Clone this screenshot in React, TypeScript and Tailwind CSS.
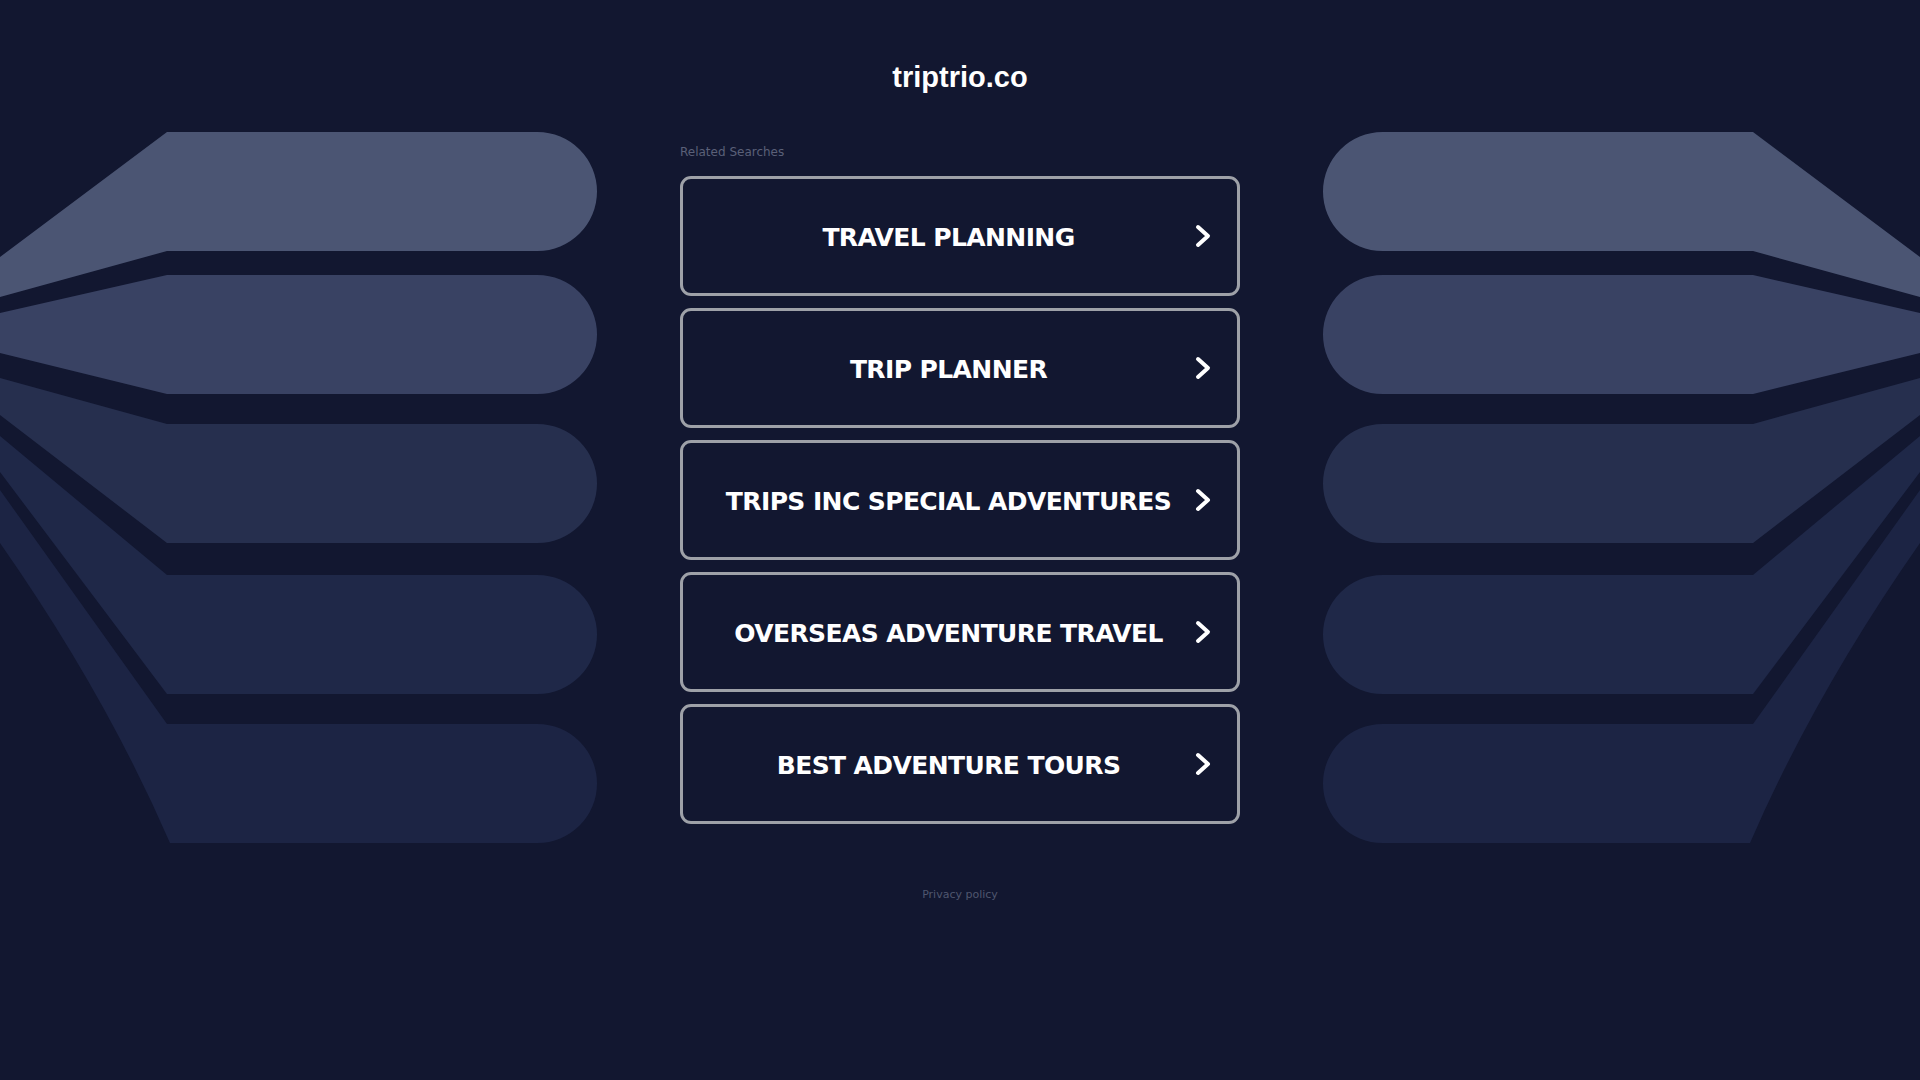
const searches = [
  "TRAVEL PLANNING",
  "TRIP PLANNER",
  "TRIPS INC SPECIAL ADVENTURES",
  "OVERSEAS ADVENTURE TRAVEL",
  "BEST ADVENTURE TOURS",
];

// pill bands fanning out from the page edge, top to bottom
const bands = [
  { d: "M0,257 L167,132 L537.5,132 A59.5,59.5 0 0 1 537.5,251 L167,251 L0,297 Z", fill: "#4b5573" },
  { d: "M0,313 L167,275 L537.5,275 A59.5,59.5 0 0 1 537.5,394 L167,394 L0,353 Z", fill: "#394263" },
  { d: "M0,378 L167,424 L537.5,424 A59.5,59.5 0 0 1 537.5,543 L167,543 L0,415 Z", fill: "#262f4e" },
  { d: "M0,436 L167,575 L537.5,575 A59.5,59.5 0 0 1 537.5,694 L167,694 L0,472 Z", fill: "#1f2848" },
  { d: "M0,490 L167,724 L537.5,724 A59.5,59.5 0 0 1 537.5,843 L170,843 Q105,693 0,543 Z", fill: "#1c2444" },
];

function Wing({ flip = false }: { flip?: boolean }) {
  return (
    <svg width="600" height="860" viewBox="0 0 600 860" className="block shrink-0">
      <g transform={flip ? "translate(600,0) scale(-1,1)" : undefined}>
        {bands.map((b, i) => (
          <path key={i} d={b.d} fill={b.fill} />
        ))}
      </g>
    </svg>
  );
}

function Chevron() {
  return (
    <svg width="18" height="28" viewBox="0 0 18 28" className="shrink-0">
      <polyline
        points="4,5 14,14 4,23"
        fill="none"
        stroke="#ffffff"
        strokeWidth="4"
        strokeLinecap="round"
        strokeLinejoin="round"
      />
    </svg>
  );
}

export default function App() {
  return (
    <div className="flex min-h-screen bg-[#121730]">
      <Wing />

      <div className="flex flex-1 flex-col items-center pt-[58px]">
        <h1 className="text-[29px] font-bold leading-[38px] text-white [font-family:'Liberation_Sans',Arial,sans-serif]">
          triptrio.co
        </h1>

        <div className="mt-[47px] w-[560px]">
          <p className="text-[12px] leading-[18px] text-[#5a6078] [font-family:'DejaVu_Sans',sans-serif]">
            Related Searches
          </p>

          <div className="mt-[15px] flex flex-col gap-[12px]">
            {searches.map((label) => (
              <a
                key={label}
                href="#"
                className="flex h-[120px] items-center gap-[5px] rounded-[11px] border-[3px] border-[#9ea1a8] bg-[#121730] pl-[25px] pr-[25px]"
              >
                <span className="flex-1 pt-[4px] text-center text-[25px] font-bold leading-[30px] tracking-[-0.6px] text-white [font-family:'DejaVu_Sans',sans-serif]">
                  {label}
                </span>
                <Chevron />
              </a>
            ))}
          </div>
        </div>

        <p className="mt-[63px] text-[11px] leading-[16px] text-[#4f566e] [font-family:'DejaVu_Sans',sans-serif]">
          Privacy policy
        </p>
      </div>

      <Wing flip />
    </div>
  );
}
